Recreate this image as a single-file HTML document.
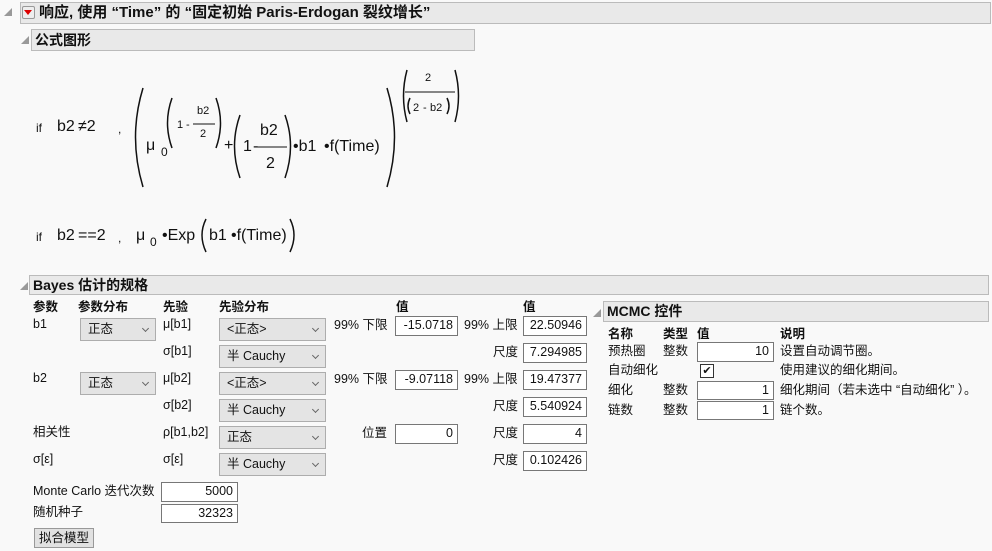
<!DOCTYPE html>
<html><head><meta charset="utf-8"><style>
body{margin:0;width:992px;height:551px;background:#f9f9f9;position:relative;overflow:hidden;font-family:"Liberation Sans","Noto Sans CJK SC",sans-serif;font-size:12.5px;line-height:15px;color:#111}
.a{position:absolute;white-space:nowrap}
.hd{position:absolute;background:#e9e9e9;border:1px solid #bbb;font-weight:bold;font-size:14px;box-sizing:border-box;padding-left:3px;line-height:18px}
.tri{position:absolute;width:0;height:0;border-left:8px solid transparent;border-bottom:8px solid #999}
.dd{position:absolute;background:#e4e4e4;border:1px solid #adadad;box-sizing:border-box;padding-left:7px;line-height:21px;font-size:12.5px}
.dd:after{content:"";position:absolute;right:7px;top:7px;width:4px;height:4px;border-right:1px solid #666;border-bottom:1px solid #666;transform:rotate(45deg)}
.in{position:absolute;background:#fff;border:1px solid #777;box-sizing:border-box;text-align:right;padding-right:4px;line-height:17px;font-size:12.5px}
.b{font-weight:bold}
</style></head><body>
<div class="tri" style="left:4px;top:8px"></div>
<div class="hd" style="left:20px;top:2px;width:971px;height:22px;padding-left:18px;line-height:20px;font-size:15px">响应, 使用 “Time” 的 “固定初始 Paris-Erdogan 裂纹增长”</div>
<div class="a" style="left:22px;top:6px;width:11px;height:11px;border:1px solid #999;background:#eee;border-radius:2px"></div>
<div class="a" style="left:24px;top:10px;width:0;height:0;border-left:4px solid transparent;border-right:4px solid transparent;border-top:5px solid #d00"></div>

<div class="tri" style="left:21px;top:36px"></div>
<div class="hd" style="left:31px;top:29px;width:444px;height:22px;line-height:20px">公式图形</div>

<svg class="a" style="left:0;top:0" width="992" height="270" font-family="Liberation Sans,sans-serif" fill="#111">
<g fill="none" stroke="#111" stroke-width="1.5">
<path d="M143 88 Q128 137 143 187"/><path d="M387 88 Q402 137 387 187"/>
<path d="M172 98 Q163 123 172 148"/><path d="M216 98 Q225 123 216 148"/>
<path d="M240 115 Q229 146 240 178"/><path d="M285 115 Q296 146 285 178"/>
<path d="M407 70 Q400 96 407 122"/><path d="M455 70 Q462 96 455 122"/>
<path d="M410 98 Q406 106 410 114"/><path d="M447 98 Q451 106 447 114"/>
<path d="M206 219 Q198 235 206 252"/><path d="M290 219 Q298 235 290 252"/>
</g>
<g stroke="#111" stroke-width="1"><line x1="193" y1="124" x2="215" y2="124"/><line x1="256" y1="147" x2="287" y2="147"/><line x1="405" y1="92" x2="455" y2="92"/></g>
<text x="36" y="132" font-size="12">if</text>
<text x="57" y="131" font-size="16">b2</text><text x="78" y="131" font-size="16">≠2</text>
<text x="118" y="133" font-size="12">,</text>
<text x="146" y="150" font-size="16">μ</text><text x="161" y="156" font-size="12">0</text>
<text x="177" y="128" font-size="11">1</text><text x="186" y="128" font-size="11">-</text>
<text x="197" y="114" font-size="11">b2</text><text x="200" y="137" font-size="11">2</text>
<text x="224" y="150" font-size="16">+</text>
<text x="243" y="151" font-size="16">1</text><text x="253" y="151" font-size="16">-</text>
<text x="260" y="135" font-size="16">b2</text><text x="266" y="168" font-size="16">2</text>
<text x="293" y="151" font-size="16">•b1</text><text x="324" y="151" font-size="16">•f(Time)</text>
<text x="425" y="81" font-size="11">2</text>
<text x="413" y="111" font-size="11">2</text><text x="423" y="111" font-size="11">-</text><text x="430" y="111" font-size="11">b2</text>
<text x="36" y="241" font-size="12">if</text>
<text x="57" y="240" font-size="16">b2</text><text x="78" y="240" font-size="16">==2</text>
<text x="118" y="242" font-size="12">,</text>
<text x="136" y="240" font-size="16">μ</text><text x="150" y="246" font-size="12">0</text>
<text x="162" y="240" font-size="16">•Exp</text>
<text x="209" y="240" font-size="16">b1</text><text x="231" y="240" font-size="16">•f(Time)</text>
</svg>

<div class="tri" style="left:20px;top:282px"></div>
<div class="hd" style="left:29px;top:275px;width:960px;height:20px">Bayes 估计的规格</div>

<div class="a b" style="left:33px;top:300px">参数</div>
<div class="a b" style="left:78px;top:300px">参数分布</div>
<div class="a b" style="left:163px;top:300px">先验</div>
<div class="a b" style="left:219px;top:300px">先验分布</div>
<div class="a b" style="left:396px;top:300px">值</div>
<div class="a b" style="left:523px;top:300px">值</div>

<div class="a" style="left:33px;top:317px">b1</div>
<div class="dd" style="left:80px;top:318px;width:76px;height:23px">正态</div>
<div class="a" style="left:163px;top:317px">μ[b1]</div>
<div class="dd" style="left:219px;top:318px;width:107px;height:23px">&lt;正态&gt;</div>
<div class="a" style="left:334px;top:318px">99% 下限</div>
<div class="in" style="left:395px;top:316px;width:63px;height:20px">-15.0718</div>
<div class="a" style="left:464px;top:318px">99% 上限</div>
<div class="in" style="left:523px;top:316px;width:64px;height:20px">22.50946</div>

<div class="a" style="left:163px;top:344px">σ[b1]</div>
<div class="dd" style="left:219px;top:345px;width:107px;height:23px">半 Cauchy</div>
<div class="a" style="left:493px;top:345px">尺度</div>
<div class="in" style="left:523px;top:343px;width:64px;height:20px">7.294985</div>

<div class="a" style="left:33px;top:371px">b2</div>
<div class="dd" style="left:80px;top:372px;width:76px;height:23px">正态</div>
<div class="a" style="left:163px;top:371px">μ[b2]</div>
<div class="dd" style="left:219px;top:372px;width:107px;height:23px">&lt;正态&gt;</div>
<div class="a" style="left:334px;top:372px">99% 下限</div>
<div class="in" style="left:395px;top:370px;width:63px;height:20px">-9.07118</div>
<div class="a" style="left:464px;top:372px">99% 上限</div>
<div class="in" style="left:523px;top:370px;width:64px;height:20px">19.47377</div>

<div class="a" style="left:163px;top:398px">σ[b2]</div>
<div class="dd" style="left:219px;top:399px;width:107px;height:23px">半 Cauchy</div>
<div class="a" style="left:493px;top:399px">尺度</div>
<div class="in" style="left:523px;top:397px;width:64px;height:20px">5.540924</div>

<div class="a" style="left:33px;top:425px">相关性</div>
<div class="a" style="left:163px;top:425px">ρ[b1,b2]</div>
<div class="dd" style="left:219px;top:426px;width:107px;height:23px">正态</div>
<div class="a" style="left:362px;top:426px">位置</div>
<div class="in" style="left:395px;top:424px;width:63px;height:20px">0</div>
<div class="a" style="left:493px;top:426px">尺度</div>
<div class="in" style="left:523px;top:424px;width:64px;height:20px">4</div>

<div class="a" style="left:33px;top:452px">σ[ε]</div>
<div class="a" style="left:163px;top:452px">σ[ε]</div>
<div class="dd" style="left:219px;top:453px;width:107px;height:23px">半 Cauchy</div>
<div class="a" style="left:493px;top:453px">尺度</div>
<div class="in" style="left:523px;top:451px;width:64px;height:20px">0.102426</div>

<div class="a" style="left:33px;top:484px">Monte Carlo 迭代次数</div>
<div class="in" style="left:161px;top:482px;width:77px;height:20px">5000</div>
<div class="a" style="left:33px;top:505px">随机种子</div>
<div class="in" style="left:161px;top:504px;width:77px;height:19px">32323</div>
<div class="a" style="left:34px;top:528px;width:60px;height:20px;background:#e1e1e1;border:1px solid #999;box-sizing:border-box;text-align:center;line-height:18px">拟合模型</div>

<div class="tri" style="left:593px;top:309px"></div>
<div class="hd" style="left:603px;top:301px;width:386px;height:21px">MCMC 控件</div>
<div class="a b" style="left:608px;top:327px">名称</div>
<div class="a b" style="left:663px;top:327px">类型</div>
<div class="a b" style="left:697px;top:327px">值</div>
<div class="a b" style="left:780px;top:327px">说明</div>
<div class="a" style="left:608px;top:344px">预热圈</div>
<div class="a" style="left:663px;top:344px">整数</div>
<div class="in" style="left:697px;top:342px;width:77px;height:20px">10</div>
<div class="a" style="left:780px;top:344px">设置自动调节圈。</div>
<div class="a" style="left:608px;top:363px">自动细化</div>
<div class="a" style="left:700px;top:364px;width:12px;height:12px;background:#fff;border:1px solid #333;font-size:11px;line-height:12px;text-align:center">✔</div>
<div class="a" style="left:780px;top:363px">使用建议的细化期间。</div>
<div class="a" style="left:608px;top:383px">细化</div>
<div class="a" style="left:663px;top:383px">整数</div>
<div class="in" style="left:697px;top:381px;width:77px;height:19px">1</div>
<div class="a" style="left:780px;top:383px">细化期间（若未选中 “自动细化” ）。</div>
<div class="a" style="left:608px;top:403px">链数</div>
<div class="a" style="left:663px;top:403px">整数</div>
<div class="in" style="left:697px;top:401px;width:77px;height:19px">1</div>
<div class="a" style="left:780px;top:403px">链个数。</div>
</body></html>
